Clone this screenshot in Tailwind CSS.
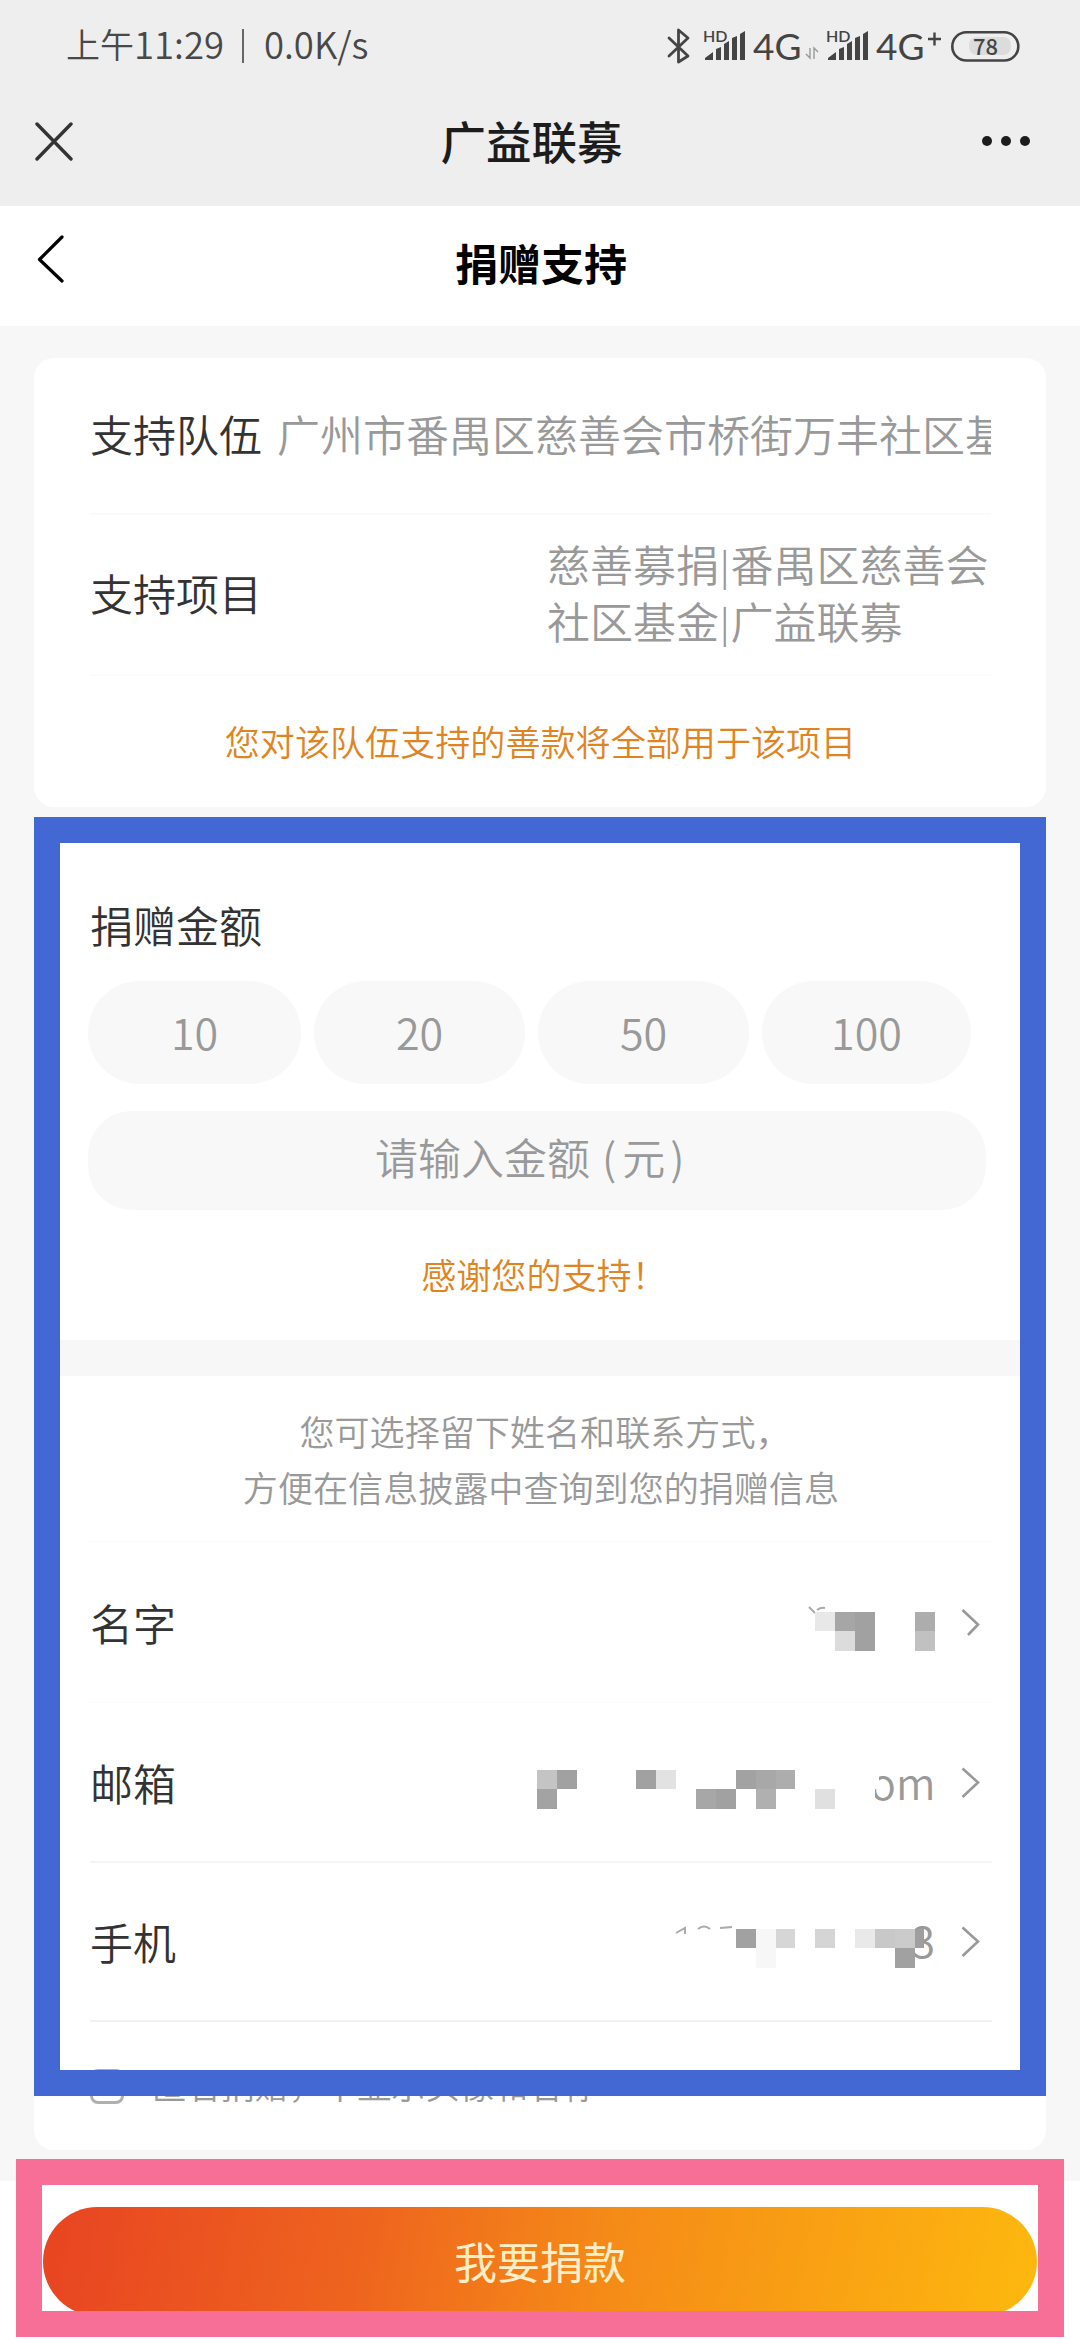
<!DOCTYPE html>
<html lang="zh-CN">
<head>
<meta charset="utf-8">
<title>捐赠支持</title>
<script src="https://cdn.jsdelivr.net/npm/@tailwindcss/browser@4"></script>
</head>
<body class="bg-[#f7f7f7]">
<div class="relative w-[1080px] h-[2340px] overflow-hidden flex flex-col bg-[#f7f7f7] font-['Noto_Sans_CJK_SC',sans-serif] font-[350] text-[43px] text-[#333]">

  <!-- status bar and app title -->
  <header class="h-[206px] shrink-0 bg-[#eeeeee] flex flex-col">
    <div class="h-[88px] pl-[66px] pr-[59px] flex items-center justify-between text-[#484848] font-[350]">
      <div class="flex items-center text-[36.500px] leading-[44px] whitespace-nowrap">
        <span class="text-[34px]">上午</span><span>11:29</span>
        <span class="w-[2px] h-[34px] bg-[#666] ml-[18px] mr-[20px] mt-[4px]"></span>
        <span>0.0K/s</span>
      </div>
      <svg class="w-[355px] h-[40px] mt-[4px]" viewBox="667 24 355 40" fill="none" stroke="#444">
        <path d="M670 36l19 18-9.500 6V28l9.500 8-19 18" stroke-width="2.800" stroke-linejoin="round" stroke-linecap="round"/>
        <g fill="#444" stroke="none">
          <text x="704" y="39.500" font-size="16" class="font-['Lato',sans-serif] font-semibold">HD</text>
          <path d="M706 58v-2l8-6v8zM717 58v-11l5-2v13zM725 58v-16l5-3v19zM733 58v-22l5-2v24zM741 58v-26l5-3v29z"/>
          <text x="754" y="58" font-size="37" class="font-['Lato',sans-serif] font-normal">4G</text>
          <text x="827" y="39.500" font-size="16" class="font-['Lato',sans-serif] font-semibold">HD</text>
          <path d="M829 58v-2l8-6v8zM840 58v-11l5-2v13zM848 58v-16l5-3v19zM856 58v-22l5-2v24zM864 58v-26l5-3v29z"/>
          <text x="877" y="58" font-size="37" class="font-['Lato',sans-serif] font-normal">4G</text>
        </g>
        <path d="M811 46v10l-4-4M815 57V46l4 4" stroke="#999" stroke-width="1.400"/>
        <path d="M929 37h13M935.500 30.500v13" stroke-width="2.400"/>
        <rect x="953.300" y="30.300" width="66" height="28.200" rx="14.100" stroke-width="2.600"/>
        <rect x="970" y="35" width="42" height="18" rx="8" fill="#dcdcdc" stroke="none"/>
        <text x="986.500" y="53" font-size="22" fill="#444" stroke="none" text-anchor="middle" class="font-medium">78</text>
      </svg>
    </div>
    <div class="h-[106px] pl-[35px] pr-[48px] flex items-center justify-between">
      <svg class="w-[40px] h-[40px]" viewBox="0 0 40 40" fill="none" stroke="#333" stroke-width="3.400" stroke-linecap="round"><path d="M2 3l34 35M36 3L2 38"/></svg>
      <h1 class="text-[45.500px] leading-[60px] font-medium text-[#1c1c1c] ml-[8px] mb-[3px]">广益联募</h1>
      <svg class="w-[52px] h-[12px]" viewBox="0 0 52 12" fill="#1c1c1c"><circle cx="7" cy="6" r="5"/><circle cx="26" cy="6" r="5"/><circle cx="45" cy="6" r="5"/></svg>
    </div>
  </header>

  <nav class="h-[120px] shrink-0 bg-white px-[36px] flex items-center justify-between text-black">
    <svg class="w-[30px] h-[50px] mb-[16px]" viewBox="0 0 30 50" fill="none" stroke="#000" stroke-width="3.200" stroke-linecap="round" stroke-linejoin="round"><path d="M26 4L3.500 26.500 26 48"/></svg>
    <h2 class="leading-[60px] font-bold mb-[8px] ml-[2px]">捐赠支持</h2>
    <span class="w-[30px]"></span>
  </nav>

  <main class="pt-[32px] px-[34px] flex flex-col gap-[36px] shrink-0">
    <section class="h-[449px] bg-white rounded-[20px] pl-[56px] pr-[55px] flex flex-col">
      <div class="h-[157px] pb-[5px] flex items-center border-b-2 border-[#fafafa] whitespace-nowrap">
        <span>支持队伍</span>
        <span class="ml-[15px] flex-1 overflow-hidden text-[#999]">广州市番禺区慈善会市桥街万丰社区基</span>
      </div>
      <div class="h-[161px] pb-[5px] flex items-center justify-between border-b-2 border-[#fbfbfb]">
        <span>支持项目</span>
        <p class="w-[444px] leading-[57px] text-[#999] whitespace-nowrap">慈善募捐<span class="text-[36px] mx-[1px] align-[2px] leading-none">|</span>番禺区慈善会<br>社区基金<span class="text-[36px] mx-[1px] align-[2px] leading-none">|</span>广益联募</p>
      </div>
      <p class="flex-1 flex items-center justify-center text-[35.100px] text-[#e08421]">您对该队伍支持的善款将全部用于该项目</p>
    </section>

    <section class="h-[497px] bg-white px-[54px] flex flex-col">
      <h3 class="mt-[48px] ml-[2px] leading-[66px]">捐赠金额</h3>
      <div class="mt-[24px] flex gap-[13px] text-[#999]">
        <div class="w-[213px] h-[103px] pb-[3px] rounded-full bg-[#f8f8f8] flex items-center justify-center">10</div>
        <div class="w-[211px] h-[103px] pb-[3px] rounded-full bg-[#f8f8f8] flex items-center justify-center">20</div>
        <div class="w-[211px] h-[103px] pb-[3px] rounded-full bg-[#f8f8f8] flex items-center justify-center">50</div>
        <div class="w-[209px] h-[103px] pb-[3px] rounded-full bg-[#f8f8f8] flex items-center justify-center">100</div>
      </div>
      <div class="mt-[27px] w-[898px] h-[99px] rounded-[44px] bg-[#f8f8f8] text-[#999] pl-[287px] flex items-center whitespace-nowrap leading-[60px] pb-[9px]">
        <span>请输入金额</span><span class="ml-[12px]">(</span><span class="ml-[6px]">元</span><span class="ml-[5px]">)</span>
      </div>
      <p class="mt-[38px] text-center text-[35.100px] leading-[52px] text-[#e08421] pl-[8px]">感谢您的支持！</p>
    </section>

    <section class="h-[774px] bg-white rounded-b-[20px] pl-[56px] pr-[54px] flex flex-col">
      <div class="h-[166px] flex flex-col justify-center text-center text-[35.100px] leading-[56px] text-[#999] border-b border-[#fbfbfb]">
        <p class="pl-[8px]">您可选择留下姓名和联系方式，</p>
        <p>方便在信息披露中查询到您的捐赠信息</p>
      </div>
      <div class="h-[161px] flex items-center justify-between border-b border-[#fbfbfb]">
        <span>名字</span>
        <svg class="w-[455px] h-[60px] mt-[15px]" viewBox="537 1599 455 60" shape-rendering="crispEdges">
          <path d="M809 1606l6 6M817 1609q4-3 8-2" fill="none" stroke="#aaa" stroke-width="2" shape-rendering="auto"/>
          <rect x="815" y="1611" width="20" height="19" fill="#e8e8e8"/>
          <rect x="835" y="1611" width="20" height="19" fill="#a6a6a6"/>
          <rect x="855" y="1611" width="20" height="39" fill="#a1a1a1"/>
          <rect x="835" y="1630" width="20" height="20" fill="#dcdcdc"/>
          <rect x="915" y="1611" width="20" height="19" fill="#adadad"/>
          <rect x="915" y="1630" width="20" height="20" fill="#c1c1c1"/>
          <path d="M962.500 1609l15.500 14.500-10 10.500" fill="none" stroke="#999" stroke-width="2.600" shape-rendering="auto"/>
        </svg>
      </div>
      <div class="h-[160px] flex items-center justify-between border-b-2 border-[#f5f5f5]">
        <span>邮箱</span>
        <svg class="w-[455px] h-[60px] mt-[4px]" viewBox="537 1754 455 60" shape-rendering="crispEdges">
          <rect x="537" y="1770" width="20" height="19" fill="#c4c4c4"/>
          <rect x="557" y="1770" width="20" height="19" fill="#a1a1a1"/>
          <rect x="537" y="1789" width="20" height="20" fill="#a3a3a3"/>
          <rect x="636" y="1770" width="20" height="19" fill="#a1a1a1"/>
          <rect x="656" y="1770" width="20" height="19" fill="#e2e2e2"/>
          <rect x="736" y="1770" width="20" height="19" fill="#a2a2a2"/>
          <rect x="756" y="1770" width="20" height="19" fill="#a8a8a8"/>
          <rect x="776" y="1770" width="19" height="19" fill="#adadad"/>
          <rect x="696" y="1789" width="20" height="20" fill="#a7a7a7"/>
          <rect x="716" y="1789" width="20" height="20" fill="#a1a1a1"/>
          <rect x="756" y="1789" width="20" height="20" fill="#b0b0b0"/>
          <rect x="815" y="1789" width="20" height="20" fill="#e0e0e0"/>
          <text x="935.500" y="1800" font-size="43" fill="#999" text-anchor="end">om</text>
          <rect x="860" y="1770" width="15" height="32" fill="#fff"/>
          <rect x="872" y="1776" width="7" height="13" fill="#fff"/>
          <path d="M962.500 1768.500l15.500 14-15.500 14.500" fill="none" stroke="#999" stroke-width="2.600" shape-rendering="auto"/>
        </svg>
      </div>
      <div class="h-[159px] flex items-center justify-between border-b-2 border-[#f2f2f2]">
        <span>手机</span>
        <svg class="w-[455px] h-[60px]" viewBox="537 1912 455 60" shape-rendering="crispEdges">
          <path d="M676 1933l9-5v6M698 1929q6-5 12 0M720 1928l12-1" fill="none" stroke="#aaa" stroke-width="2" shape-rendering="auto"/>
          <text x="935" y="1958" font-size="43" fill="#999" text-anchor="end">3</text>
          <rect x="736" y="1929" width="20" height="19" fill="#a1a1a1"/>
          <rect x="756" y="1929" width="20" height="39" fill="#f7f7f7"/>
          <rect x="776" y="1929" width="19" height="19" fill="#d6d6d6"/>
          <rect x="815" y="1929" width="20" height="19" fill="#d5d5d5"/>
          <rect x="855" y="1929" width="20" height="19" fill="#e9e9e9"/>
          <rect x="875" y="1929" width="20" height="19" fill="#c8c8c8"/>
          <rect x="895" y="1929" width="20" height="19" fill="#cbcbcb"/>
          <rect x="915" y="1929" width="9" height="19" fill="#9f9f9f"/>
          <rect x="895" y="1948" width="20" height="20" fill="#a1a1a1"/>
          <path d="M962.500 1927.500l15.500 14-15.500 14.500" fill="none" stroke="#999" stroke-width="2.600" shape-rendering="auto"/>
        </svg>
      </div>
      <div class="flex-1 flex items-center text-[34.200px] text-[#999] pb-[3px]">
        <span class="w-[34px] h-[35px] border-[3px] border-[#b0b0b0] rounded-[8px] relative top-[2px]"></span>
        <span class="ml-[28px]">匿名捐赠，不显示头像和名称</span>
      </div>
    </section>
  </main>

  <footer class="mt-[31px] h-[159px] shrink-0 bg-white px-[43px] pt-[26px]">
    <button class="w-[994px] h-[109px] pb-[2px] rounded-full bg-[linear-gradient(100deg,#e84422_0%,#ee641e_32%,#f58a18_56%,#fdb80e_100%)] flex items-center justify-center text-[#ffeec8] font-normal">我要捐款</button>
  </footer>

  <!-- highlight frames laid over the page -->
  <div class="absolute left-[34px] top-[817px] w-[1012px] h-[1279px] border-[26px] border-[#4367d3]"></div>
  <div class="absolute left-[16px] top-[2159px] w-[1048px] h-[178px] border-[26px] border-[#f76e97]"></div>
</div>
</body>
</html>
